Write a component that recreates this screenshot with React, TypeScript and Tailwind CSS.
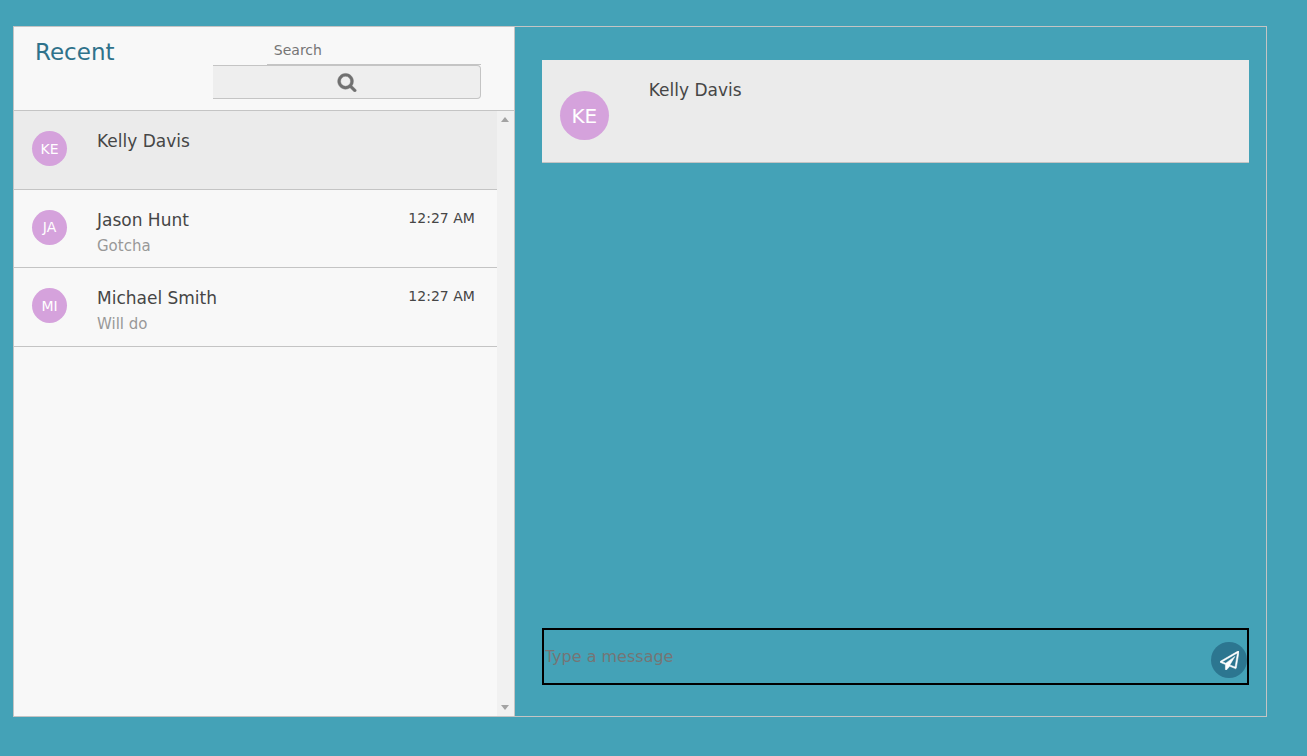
import { useState } from "react";

type Contact = {
  name: string;
  initials: string;
  preview?: string;
  time?: string;
};

const contacts: Contact[] = [
  { name: "Kelly Davis", initials: "KE" },
  { name: "Jason Hunt", initials: "JA", preview: "Gotcha", time: "12:27 AM" },
  { name: "Michael Smith", initials: "MI", preview: "Will do", time: "12:27 AM" },
];

function SearchIcon() {
  return (
    <svg viewBox="0 0 1792 1792" className="size-5 fill-current stroke-current" strokeWidth="40" aria-hidden="true">
      <path d="M1216 832q0-185-131.5-316.5t-316.5-131.5-316.5 131.5-131.5 316.5 131.5 316.5 316.5 131.5 316.5-131.5 131.5-316.5zm512 832q0 52-38 90t-90 38q-54 0-90-38l-343-342q-179 124-399 124-143 0-273.5-55.5t-225-150-150-225-55.5-273.5 55.5-273.5 150-225 225-150 273.5-55.5 273.5 55.5 225 150 150 225 55.5 273.5q0 220-124 399l343 343q37 37 37 90z" />
    </svg>
  );
}

function PaperPlaneIcon() {
  return (
    <svg viewBox="0 0 1792 1792" className="mt-px ml-px size-[19px] fill-current stroke-current" strokeWidth="50" aria-hidden="true">
      <path d="M1764 11q33 24 27 64l-256 1536q-5 29-32 45-14 8-31 8-11 0-24-5l-527-215-298 327q-18 21-47 21-14 0-23-4-19-7-30-23.5t-11-36.5v-452l-472-193q-37-14-40-55-3-39 32-59l1664-960q35-21 68 2zm-342 1499l221-1323-1434 827 336 137 863-639-478 797z" />
    </svg>
  );
}

function ScrollTrack() {
  return (
    <div className="flex w-[17px] shrink-0 flex-col items-center justify-between bg-[#f1f1f1] py-[6px]" aria-hidden="true">
      <svg viewBox="0 0 8 5" className="h-[5px] w-2 fill-[#a3a3a3]">
        <path d="M0 5 4 0l4 5z" />
      </svg>
      <svg viewBox="0 0 8 5" className="h-[5px] w-2 fill-[#a3a3a3]">
        <path d="M0 0h8L4 5z" />
      </svg>
    </div>
  );
}

function ContactRow({ contact, active, onSelect }: { contact: Contact; active: boolean; onSelect: () => void }) {
  return (
    <li className="grid border-b border-[#c4c4c4]">
      <button
        type="button"
        onClick={onSelect}
        className={
          active
            ? "flex items-start bg-[#ebebeb] pt-[18px] pr-[22px] pl-[18px] text-left"
            : "flex items-start pt-[18px] pr-[22px] pl-[18px] text-left"
        }
      >
        <span className="mt-[2px] flex size-[35px] shrink-0 items-center justify-center rounded-full bg-[#d5a2dc] text-sm text-white">
          {contact.initials}
        </span>
        <span className="ml-[30px] flex flex-1 flex-col">
          <span className="text-[17px] leading-6 text-[#464646]">{contact.name}</span>
          <span className="mt-[2px] text-[15px] leading-6 text-[#989898]">{contact.preview}</span>
        </span>
        <span className="text-sm text-[#464646]">{contact.time}</span>
      </button>
    </li>
  );
}

export default function App() {
  const [selected, setSelected] = useState(0);
  const current = contacts[selected];

  return (
    <div className="flex min-h-screen bg-[#44a2b7] pt-[26px] pr-10 pb-[39px] pl-[13px] font-['DejaVu_Sans',Verdana,sans-serif]">
      <main className="grid flex-1 grid-cols-[2fr_3fr] border border-[#c4c4c4]">
        <section className="flex min-w-0 flex-col border-r border-[#c4c4c4] bg-[#f8f8f8]">
          <header className="flex items-start justify-between border-b border-[#c4c4c4] pt-[9px] pr-[33px] pb-[11px] pl-[21px]">
            <h1 className="text-[23px] leading-8 text-[#2f728b]">Recent</h1>
            <form className="flex w-[60%] flex-col items-end" onSubmit={(e) => e.preventDefault()}>
              <input
                type="text"
                aria-label="Search"
                placeholder="Search"
                className="h-[29px] w-4/5 border-b border-[#c4c4c4] pl-[7px] text-sm text-[#464646] outline-none placeholder:text-[#757575]"
              />
              <button
                type="submit"
                aria-label="Search contacts"
                className="flex h-[34px] w-full items-center justify-center rounded-r border border-l-0 border-[#c4c4c4] bg-[#eeeeee] text-[#707070]"
              >
                <SearchIcon />
              </button>
            </form>
          </header>
          <div className="flex flex-1">
            <ul className="grid min-h-[236px] flex-1 auto-rows-fr self-start">
              {contacts.map((contact, index) => (
                <ContactRow
                  key={contact.name}
                  contact={contact}
                  active={index === selected}
                  onSelect={() => setSelected(index)}
                />
              ))}
            </ul>
            <ScrollTrack />
          </div>
        </section>

        <section className="flex min-w-0 flex-col justify-between pt-[33px] pr-[17px] pb-[31px] pl-[27px]">
          <header className="flex items-start border-b border-[#c4c4c4] bg-[#ebebeb] px-[18px] pt-[18px] pb-[22px]">
            <span className="mt-[13px] flex size-[49px] shrink-0 items-center justify-center rounded-full bg-[#d5a2dc] text-xl text-white">
              {current.initials}
            </span>
            <h2 className="ml-10 text-[17px] leading-6 text-[#464646]">{current.name}</h2>
          </header>

          <form className="flex items-center border-2 border-black" onSubmit={(e) => e.preventDefault()}>
            <input
              type="text"
              aria-label="Message"
              placeholder="Type a message"
              className="h-[53px] min-w-0 flex-1 pl-px text-base text-[#464646] outline-none placeholder:text-[#757575]"
            />
            <button
              type="submit"
              aria-label="Send message"
              className="mt-[7px] flex size-9 shrink-0 items-center justify-center rounded-full bg-[#2c7690] text-white"
            >
              <PaperPlaneIcon />
            </button>
          </form>
        </section>
      </main>
    </div>
  );
}
